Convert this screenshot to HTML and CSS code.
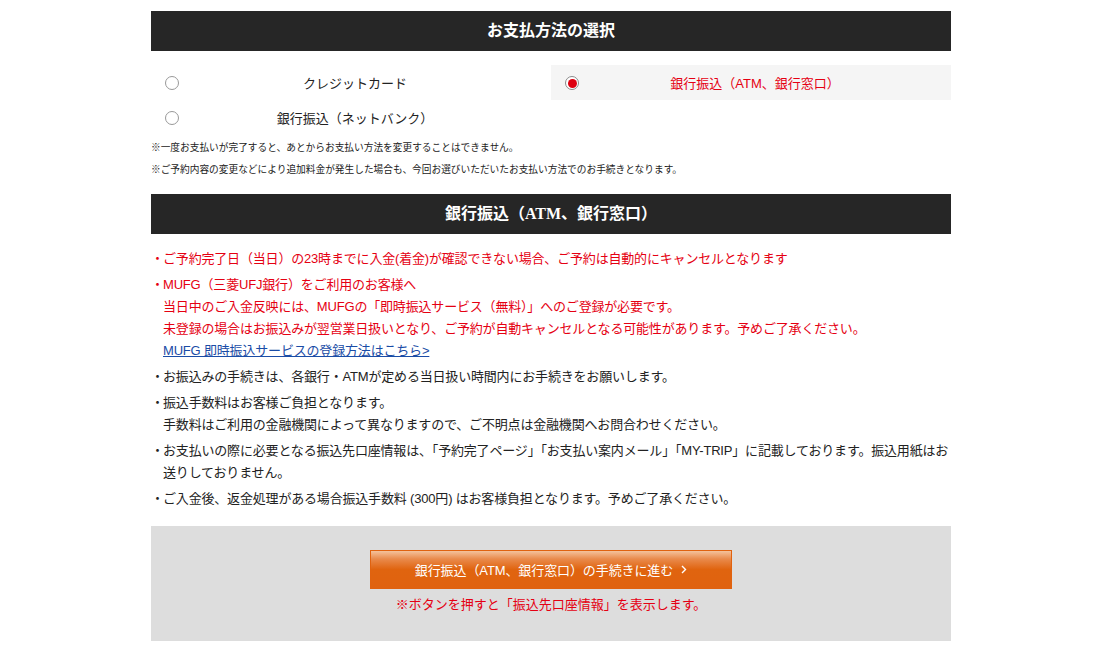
FILE: index.html
```html
<!DOCTYPE html>
<html lang="ja">
<head>
    <meta charset="UTF-8">
    <meta name="viewport" content="width=device-width, initial-scale=1.0">
    <title>お支払方法の選択</title>
    <link rel="stylesheet" href="styles.css">
</head>
<body>
    <div class="wrap">
        <h2 class="sec-title">お支払方法の選択</h2>
        <div class="pay-options">
            <label class="pay-option">
                <span class="radio"></span>
                <span class="pay-name">クレジットカード</span>
            </label>
            <label class="pay-option is-selected">
                <span class="radio"></span>
                <span class="pay-name">銀行振込（ATM、銀行窓口）</span>
            </label>
            <label class="pay-option">
                <span class="radio"></span>
                <span class="pay-name">銀行振込（ネットバンク）</span>
            </label>
        </div>
        <div class="pay-notes">
            <p>※一度お支払いが完了すると、あとからお支払い方法を変更することはできません。</p>
            <p>※ご予約内容の変更などにより追加料金が発生した場合も、今回お選びいただいたお支払い方法でのお手続きとなります。</p>
        </div>

        <h2 class="sec-title">銀行振込（ATM、銀行窓口）</h2>
        <ul class="info-list">
            <li class="red"><span class="dot">・</span><div>ご予約完了日（当日）の23時までに入金(着金)が確認できない場合、ご予約は自動的にキャンセルとなります</div></li>
            <li class="red"><span class="dot">・</span><div>MUFG（三菱UFJ銀行）をご利用のお客様へ<br>当日中のご入金反映には、MUFGの「即時振込サービス（無料）」へのご登録が必要です。<br>未登録の場合はお振込みが翌営業日扱いとなり、ご予約が自動キャンセルとなる可能性があります。予めご了承ください。<br><a href="#" class="link">MUFG 即時振込サービスの登録方法はこちら&gt;</a></div></li>
            <li><span class="dot">・</span><div>お振込みの手続きは、各銀行・ATMが定める当日扱い時間内にお手続きをお願いします。</div></li>
            <li><span class="dot">・</span><div>振込手数料はお客様ご負担となります。<br>手数料はご利用の金融機関によって異なりますので、ご不明点は金融機関へお問合わせください。</div></li>
            <li><span class="dot">・</span><div>お支払いの際に必要となる振込先口座情報は、「予約完了ページ」「お支払い案内メール」「MY-TRIP」に記載しております。振込用紙はお送りしておりません。</div></li>
            <li><span class="dot">・</span><div>ご入金後、返金処理がある場合振込手数料 (300円) はお客様負担となります。予めご了承ください。</div></li>
        </ul>

        <div class="action-box">
            <button class="go-button">銀行振込（ATM、銀行窓口）の手続きに進む
                <svg width="6" height="9" viewBox="0 0 6 9"><path d="M1 1l3.5 3.5L1 8" fill="none" stroke="#fff" stroke-width="1.4"/></svg>
            </button>
            <p class="action-note">※ボタンを押すと「振込先口座情報」を表示します。</p>
        </div>
    </div>
</body>
</html>
```

FILE: styles.css
```css
body {
    margin: 0;
    padding: 0 0 0 2px;
    background: #fff;
    color: #222;
    font-family: "Liberation Sans", "Noto Sans CJK JP", sans-serif;
}
.wrap {
    width: 800px;
    margin: 11px auto 0;
    padding-bottom: 12px;
}
.sec-title {
    margin: 0;
    height: 40px;
    line-height: 40px;
    background: #262626;
    color: #fff;
    text-align: center;
    font-family: "Liberation Serif", "Noto Sans CJK JP", serif;
    font-size: 16px;
    font-weight: bold;
}
.pay-options {
    display: grid;
    grid-template-columns: 1fr 1fr;
    margin-top: 14px;
}
.pay-option {
    display: flex;
    align-items: center;
    height: 34px;
    padding: 0 20px 0 14px;
    font-size: 13px;
    cursor: pointer;
}
.pay-option:first-child {
    height: 35px;
}
.pay-option.is-selected {
    height: 35px;
    background: #f5f5f5;
    color: #e50012;
}
.radio {
    width: 12px;
    height: 12px;
    margin-top: 1px;
    border: 1px solid #999;
    border-radius: 50%;
    background: #fff;
    display: flex;
    align-items: center;
    justify-content: center;
}
.is-selected .radio {
    border-color: #8a8a8a;
}
.is-selected .radio::after {
    content: "";
    width: 9px;
    height: 9px;
    border-radius: 50%;
    background: #dd0010;
}
.pay-name {
    flex: 1;
    text-align: center;
}
.pay-notes {
    margin-top: 3px;
}
.pay-notes p {
    margin: 0;
    font-size: 9.7px;
    line-height: 22px;
}
.pay-notes + .sec-title {
    margin-top: 13px;
}
.info-list {
    list-style: none;
    margin: 0;
    padding: 14px 0 0;
    letter-spacing: -0.18px;
}
.info-list li {
    display: flex;
    font-size: 13px;
    line-height: 22px;
    margin-bottom: 4px;
}
.info-list li:last-child {
    margin-bottom: 0;
}
.info-list .dot {
    width: 12px;
    flex-shrink: 0;
}
.info-list li.red {
    color: #e50012;
}
.link {
    color: #1a4ca6;
    text-decoration: underline;
}
.action-box {
    margin-top: 16px;
    background: #dddddd;
    padding: 24px 0 25px;
    text-align: center;
}
.go-button {
    width: 362px;
    height: 39px;
    border: 1px solid #e0620f;
    background: linear-gradient(#f4c29c 0%, #e9894a 22%, #e0640f 50%, #e0620f 100%);
    color: #fff;
    font-family: "Liberation Sans", "Noto Sans CJK JP", sans-serif;
    font-size: 13px;
    letter-spacing: -0.1px;
    cursor: pointer;
    display: inline-flex;
    align-items: center;
    justify-content: center;
    gap: 8px;
}
.action-note {
    margin: 5px 0 0;
    color: #e50012;
    font-size: 13px;
    line-height: 22px;
}
```
